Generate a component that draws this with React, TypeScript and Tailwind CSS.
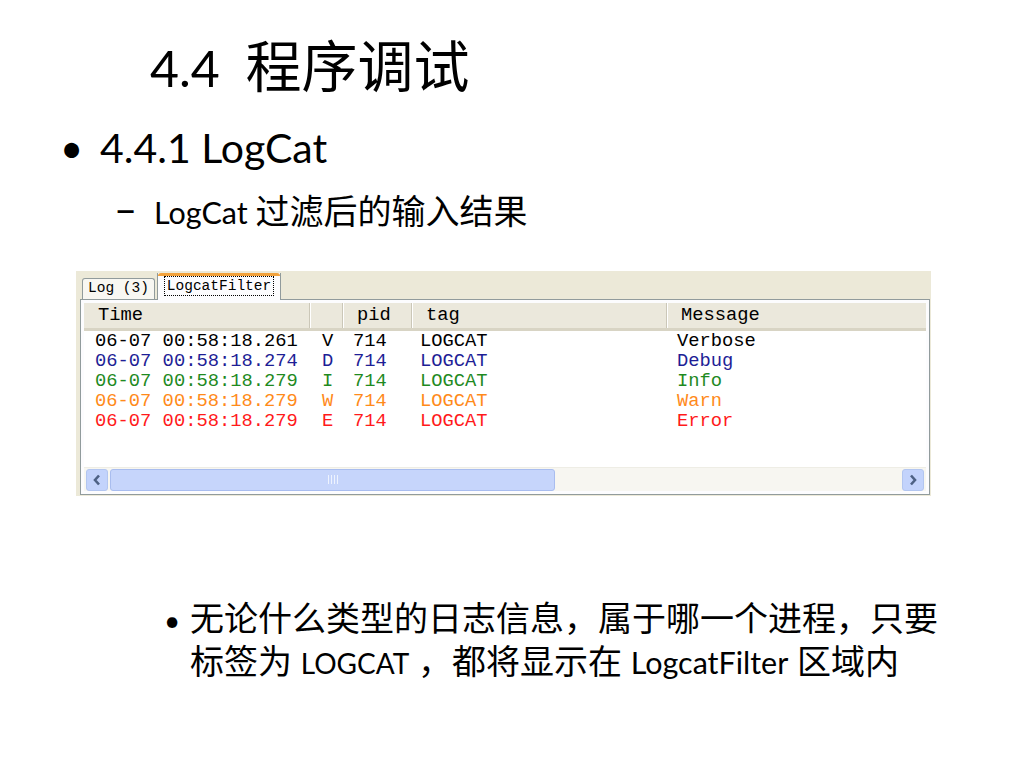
import React from 'react';

type LogRow = {
  time: string;
  level: string;
  pid: string;
  tag: string;
  message: string;
  color: string;
};

const rows: LogRow[] = [
  { time: '06-07 00:58:18.261', level: 'V', pid: '714', tag: 'LOGCAT', message: 'Verbose', color: 'text-[#000000]' },
  { time: '06-07 00:58:18.274', level: 'D', pid: '714', tag: 'LOGCAT', message: 'Debug', color: 'text-[#1e1e96]' },
  { time: '06-07 00:58:18.279', level: 'I', pid: '714', tag: 'LOGCAT', message: 'Info', color: 'text-[#1f8a1f]' },
  { time: '06-07 00:58:18.279', level: 'W', pid: '714', tag: 'LOGCAT', message: 'Warn', color: 'text-[#ff8a1a]' },
  { time: '06-07 00:58:18.279', level: 'E', pid: '714', tag: 'LOGCAT', message: 'Error', color: 'text-[#ff1a1a]' },
];

const mono = "font-['Liberation_Mono','DejaVu_Sans_Mono',monospace]";
const slide = "font-['Lato','Noto_Sans_CJK_SC',sans-serif]";

const HeaderCell: React.FC<{ label?: string; className?: string }> = ({ label, className }) => (
  <div className={`flex items-center pl-[14px] border-r border-[#cbc7b8] shadow-[1px_0_0_#ffffff] ${className ?? ''}`}>
    {label}
  </div>
);

const Chevron: React.FC<{ dir: 'left' | 'right' }> = ({ dir }) => (
  <svg width="10" height="12" viewBox="0 0 10 12">
    <path
      d={dir === 'left' ? 'M7 1.5 L3 6 L7 10.5' : 'M3 1.5 L7 6 L3 10.5'}
      fill="none"
      stroke="#4d6185"
      strokeWidth="2.6"
    />
  </svg>
);

const LogCatPanel: React.FC = () => {
  return (
    <div className="ml-[76px] w-[855px] h-[225px] bg-[#ece9d8] pt-[1px] flex flex-col">
      {/* tabs */}
      <div className={`flex items-end h-[27px] pl-[6px] ${mono} text-[14.5px] text-black`}>
        <div className="h-[21px] w-[73px] flex items-center justify-center border border-b-0 border-[#919b9c] rounded-t-[3px] bg-[#f8f7f2]">
          Log (3)
        </div>
        <div className="ml-[2px] h-[27px] w-[124px] flex flex-col border-x border-[#919b9c] bg-[#fcfcfe] -mb-[1px] relative z-10">
          <div className="h-[3px] bg-[#f2a23c] rounded-t-[3px]" />
          <div className="flex-1 flex items-start justify-center pt-[1px]">
            <span className="px-[2px] leading-[18px] outline outline-1 outline-dotted outline-black">LogcatFilter</span>
          </div>
        </div>
      </div>
      {/* frame */}
      <div className="ml-[4px] w-[850px] h-[196px] border border-[#919b9c] bg-[#fcfcfe] p-[3px] flex flex-col">
        <div className={`flex h-[28px] bg-[#ebe8dc] border-b-[3px] border-[#d8d4c4] ${mono} text-[18.8px] text-black`}>
          <HeaderCell label="Time" className="w-[226px]" />
          <HeaderCell className="w-[33px]" />
          <HeaderCell label="pid" className="w-[69px]" />
          <HeaderCell label="tag" className="w-[255px]" />
          <div className="flex items-center pl-[14px] flex-1">Message</div>
        </div>
        <div className={`flex-1 bg-white ${mono} text-[18.8px] leading-[20px]`}>
          {rows.map((r, i) => (
            <div key={i} className={`grid grid-cols-[227px_31px_67px_257px_1fr] pl-[11px] h-[20px] ${r.color}`}>
              <span className="whitespace-pre">{r.time}</span>
              <span>{r.level}</span>
              <span>{r.pid}</span>
              <span>{r.tag}</span>
              <span>{r.message}</span>
            </div>
          ))}
        </div>
        {/* horizontal scrollbar */}
        <div className="h-[24px] flex items-center bg-[#f7f6f1] border-t border-[#eeede5] px-[2px]">
          <div className="w-[22px] h-[22px] rounded-[3px] bg-[#c3d3fc] border border-[#b3c6f0] flex items-center justify-center">
            <Chevron dir="left" />
          </div>
          <div className="ml-[2px] w-[445px] h-[22px] rounded-[3px] bg-[#c6d5fb] border border-[#a9bdef] flex items-center justify-center">
            <div className="flex gap-[2px]">
              <div className="w-[1px] h-[9px] bg-[#eef3fe]" />
              <div className="w-[1px] h-[9px] bg-[#eef3fe]" />
              <div className="w-[1px] h-[9px] bg-[#eef3fe]" />
              <div className="w-[1px] h-[9px] bg-[#eef3fe]" />
            </div>
          </div>
          <div className="flex-1" />
          <div className="w-[22px] h-[22px] rounded-[3px] bg-[#c3d3fc] border border-[#b3c6f0] flex items-center justify-center">
            <Chevron dir="right" />
          </div>
        </div>
      </div>
    </div>
  );
};

export default function App() {
  return (
    <div className={`w-[1024px] h-[768px] bg-white text-black overflow-hidden ${slide}`}>
      <h1 className="pl-[150px] pt-[30px] text-[50px] leading-[72px] font-normal">
        4.4&nbsp;&nbsp;<span className="text-[56px]">程序调试</span>
      </h1>
      <div className="flex items-baseline pl-[60px] mt-[18px] text-[41px] leading-[52px]">
        <span className="w-[40px] text-[40px]">•</span>
        <span>4.4.1 LogCat</span>
      </div>
      <div className="flex items-baseline pl-[114px] mt-[15px] text-[30.5px] leading-[40px]">
        <span className="w-[40px] text-[40px] leading-[40px]">–</span>
        <span>
          LogCat <span className="text-[34px]">过滤后的输入结果</span>
        </span>
      </div>
      <div className="mt-[39px]">
        <LogCatPanel />
      </div>
      <div className="flex items-baseline pl-[164px] mt-[100px] text-[29.5px] leading-[43px]">
        <span className="w-[26px] text-[28px]">•</span>
        <span className="text-[34px]">
          无论什么类型的日志信息，属于哪一个进程，只要
          <br />
          标签为 <span className="text-[28px]">LOGCAT</span> ，都将显示在{' '}
          <span className="text-[30.5px]">LogcatFilter</span> 区域内
        </span>
      </div>
    </div>
  );
}
